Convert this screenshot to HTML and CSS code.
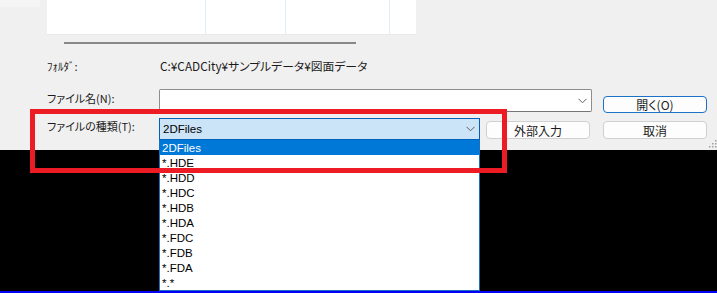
FILE: index.html
```html
<!DOCTYPE html>
<html lang="ja">
<head>
<meta charset="utf-8">
<link rel="stylesheet" href="styles.css">
</head>
<body>
<div class="page">
  <div class="dialog">
    <div class="browser-row">
      <div class="nav"></div>
      <div class="view">
        <div class="vcol"></div>
        <div class="vcol"></div>
        <div class="vcol"></div>
        <div class="vcol last"></div>
      </div>
    </div>
    <div class="hscroll"></div>
    <div class="form">
      <div class="lbl r1">ﾌｫﾙﾀﾞ:</div>
      <div class="path r1">C:¥CADCity¥サンプルデータ¥図面データ</div>

      <div class="lbl r3">ファイル名(N):</div>
      <div class="input r3">
        <svg class="chev" width="9" height="6" viewBox="0 0 9 6"><path d="M0.5 0.8 L4.5 4.8 L8.5 0.8" fill="none" stroke="#5f5f5f" stroke-width="1"/></svg>
      </div>
      <div class="btn primary r3 open">開く(O)</div>

      <div class="lbl r5">ファイルの種類(T):</div>
      <div class="combo r5">
        <span class="combo-text">2DFiles</span>
        <svg class="chev" width="9" height="6" viewBox="0 0 9 6"><path d="M0.5 0.8 L4.5 4.8 L8.5 0.8" fill="none" stroke="#5f5f5f" stroke-width="1"/></svg>
      </div>
      <div class="btn r5 ext">外部入力</div>
      <div class="btn r5 cancel">取消</div>
    </div>
    <svg class="grip" width="10" height="9" viewBox="0 0 10 9">
      <rect x="8" y="0" width="1.5" height="1.5" fill="#a0a0a0"/>
      <rect x="5" y="3" width="1.5" height="1.5" fill="#a0a0a0"/>
      <rect x="8" y="3" width="1.5" height="1.5" fill="#a0a0a0"/>
      <rect x="2" y="6" width="1.5" height="1.5" fill="#a0a0a0"/>
      <rect x="5" y="6" width="1.5" height="1.5" fill="#a0a0a0"/>
      <rect x="8" y="6" width="1.5" height="1.5" fill="#a0a0a0"/>
    </svg>
  </div>
  <div class="canvas"></div>
  <div class="blueline"></div>

  <ul class="dropdown">
    <li class="sel">2DFiles</li>
    <li>*.HDE</li>
    <li>*.HDD</li>
    <li>*.HDC</li>
    <li>*.HDB</li>
    <li>*.HDA</li>
    <li>*.FDC</li>
    <li>*.FDB</li>
    <li>*.FDA</li>
    <li>*.*</li>
  </ul>
  <div class="highlight"></div>
</div>
</body>
</html>
```
FILE: styles.css
```css
html, body {
  margin: 0;
  padding: 0;
  background: #000;
}
.page {
  position: relative;
  width: 717px;
  height: 293px;
  overflow: hidden;
  font-family: "Noto Sans CJK JP", "Liberation Sans", sans-serif;
  font-feature-settings: "palt";
  color: #1b1b1b;
}
.dialog {
  position: relative;
  height: 150px;
  background: #f0f0f0;
  box-sizing: border-box;
}
.browser-row {
  display: flex;
  align-items: flex-start;
  gap: 7px;
}
.nav {
  width: 40px;
  height: 7px;
  background: #f5f5f5;
}
.view {
  width: 369px;
  height: 35px;
  background: #fff;
  border-bottom: 1px solid #e9e9e9;
  box-sizing: border-box;
  display: grid;
  grid-template-columns: 159px 80px 104px 1fr;
}
.vcol {
  border-right: 1px solid #e1ebfa;
  height: 34px;
}
.vcol.last {
  border-right: none;
}
.hscroll {
  margin: 7px 0 0 64px;
  width: 292px;
  height: 2px;
  background: #888;
}
.form {
  margin-top: 14px;
  padding-left: 47px;
  display: grid;
  grid-template-columns: 112px 321px 6px 106px 11px 104px;
  grid-template-rows: 16px 15px 23px 6px 22px;
  font-size: 11px;
}
.r1 { grid-row: 1; }
.r3 { grid-row: 3; }
.r5 { grid-row: 5; }
.lbl {
  grid-column: 1;
  line-height: 16px;
  white-space: nowrap;
  color: #1b1b1b;
}
.lbl.r3 { margin-top: 1px; }
.path {
  grid-column: 2 / 7;
  line-height: 16px;
  padding-left: 1px;
  white-space: nowrap;
  font-size: 11.8px;
}
.input {
  grid-column: 2 / 5;
  background: #fff;
  border: 1px solid #8d8d8d;
  border-bottom-color: #767676;
  border-radius: 2px;
  box-sizing: border-box;
  display: flex;
  align-items: center;
  justify-content: flex-end;
  padding-right: 4px;
}
.combo {
  grid-column: 2;
  height: 22px;
  background: #cce4f7;
  border: 1px solid #005fb8;
  box-sizing: border-box;
  display: flex;
  align-items: center;
  justify-content: space-between;
  padding: 0 4px 0 3px;
}
.combo-text {
  font-family: "Liberation Sans", sans-serif;
  font-size: 11.5px;
  color: #000;
}
.chev {
  display: block;
}
.btn {
  height: 18px;
  box-sizing: border-box;
  border: 1px solid #d0d0d0;
  border-radius: 4px;
  background: #fdfdfd;
  display: flex;
  align-items: center;
  justify-content: center;
  font-size: 12px;
  color: #1b1b1b;
  margin-top: 3px;
}
.btn.primary {
  border-color: #1a73c6;
  margin-top: 7px;
  height: 17px;
}
.open { grid-column: 6; }
.ext { grid-column: 4; width: 104px; }
.cancel { grid-column: 6; }
.grip {
  position: absolute;
  right: 0;
  bottom: 1px;
}
.canvas {
  height: 141px;
  background: #000;
}
.blueline {
  height: 2px;
  background: #0000f5;
}
.dropdown {
  position: absolute;
  left: 159px;
  top: 140px;
  width: 321px;
  height: 151px;
  margin: 0;
  padding: 0;
  list-style: none;
  background: #fff;
  border: 1px solid #1b6fc0;
  border-top: none;
  box-sizing: border-box;
  font-family: "Liberation Sans", sans-serif;
  font-size: 11.5px;
  color: #000;
}
.dropdown li {
  height: 15px;
  line-height: 16px;
  padding-left: 2px;
}
.dropdown li.sel {
  background: #0078d7;
  color: #fff;
}
.highlight {
  position: absolute;
  left: 30px;
  top: 109px;
  width: 477px;
  height: 64px;
  border: 5px solid #ed1c24;
  box-sizing: border-box;
}
```
